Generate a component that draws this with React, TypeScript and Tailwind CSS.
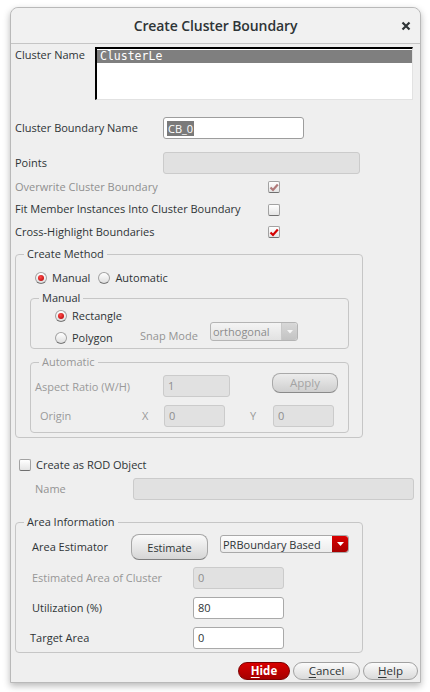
import React from "react";

const font = { fontFamily: '"Open Sans", "Liberation Sans", sans-serif' };

const Check = ({ checked = false, disabled = false }: { checked?: boolean; disabled?: boolean }) => (
  <span className="flex items-center justify-center w-[12px] h-[12px] rounded-[2px] border border-[#a2a2a2] border-b-[#6f6f6f] bg-gradient-to-b from-white to-[#e4e4e4]">
    {checked && (
      <svg width="10" height="9" viewBox="0 0 10 9">
        <path
          d="M1.5 4.5 L4 7 L8.8 1.5"
          fill="none"
          stroke={disabled ? "#b07a7a" : "#d40000"}
          strokeWidth="2.2"
        />
      </svg>
    )}
  </span>
);

const Radio = ({ on = false }: { on?: boolean }) => (
  <span className="flex items-center justify-center w-[12px] h-[12px] rounded-full border border-[#a2a2a2] border-b-[#767676] bg-gradient-to-b from-white to-[#dedede]">
    {on && <span className="w-[6px] h-[6px] rounded-full bg-[radial-gradient(circle_at_40%_35%,#ff4a4a,#b00000)]" />}
  </span>
);

const Field = ({
  value = "",
  width,
  disabled = false,
  className = "",
}: {
  value?: string;
  width: string;
  disabled?: boolean;
  className?: string;
}) => (
  <div
    className={`${width} h-[22px] rounded-[3px] border flex items-center px-[4px] text-[11px] ${
      disabled
        ? "bg-[#e1e1e1] border-[#cbcbcb] text-[#8e8e8e]"
        : "bg-white border-[#a9a9a9] text-[#2e3436]"
    } ${className}`}
  >
    {value}
  </div>
);

const Group = ({
  title,
  disabled = false,
  className = "",
  children,
}: {
  title: string;
  disabled?: boolean;
  className?: string;
  children: React.ReactNode;
}) => (
  <fieldset className={`border border-[#c6c6c6] rounded-[4px] ${className}`}>
    <legend
      className={`ml-[8px] px-[3px] leading-[16px] text-[11px] ${
        disabled ? "text-[#979797]" : "text-[#2e3436]"
      }`}
    >
      {title}
    </legend>
    {children}
  </fieldset>
);

export default function App() {
  return (
    <div className="w-[430px] h-[692px] bg-white pt-[7px] pl-[10px]" style={font}>
      <div className="w-[411px] h-[676px] rounded-t-[8px] border border-[#b9b9b9] bg-[#efefef] shadow-[0_3px_7px_rgba(0,0,0,0.28)] text-[11px] text-[#2e3436] flex flex-col">
        {/* title bar */}
        <div className="h-[36px] shrink-0 rounded-t-[8px] bg-[#f1f1f1] border-b border-[#c5c5c5] flex items-center relative">
          <div className="flex-1 text-center text-[14px] font-semibold text-[#2e3436] tracking-[-0.1px]">
            Create Cluster Boundary
          </div>
          <div className="absolute right-[9px] top-[13px]">
            <svg width="10" height="10" viewBox="0 0 10 10">
              <path d="M1.5 1.5 L8.5 8.5 M8.5 1.5 L1.5 8.5" stroke="#2e3436" strokeWidth="2.2" />
            </svg>
          </div>
        </div>

        <div className="pl-[4px] flex flex-col">
          {/* cluster name */}
          <div className="flex mt-[3px]">
            <div className="w-[80px] leading-[16px]">Cluster Name</div>
            <div className="w-[318px] h-[53px] bg-white border-t-2 border-l-2 border-t-black border-l-black border-r border-b border-r-[#e2e2e2] border-b-[#e2e2e2] pt-[1px]">
              <div
                className="h-[13px] bg-[#7f7f7f] text-white text-[11.5px] leading-[13px] pl-[3px]"
                style={{ fontFamily: '"DejaVu Sans Mono", "Liberation Mono", monospace' }}
              >
                ClusterLe
              </div>
            </div>
          </div>

          {/* boundary name */}
          <div className="flex items-center mt-[17px]">
            <div className="w-[148px]">Cluster Boundary Name</div>
            <div className="w-[141px] h-[22px] rounded-[3px] border border-[#9d9d9d] bg-white flex items-center px-[3px]">
              <span className="bg-[#7a7a7a] text-white px-[1px] leading-[15px]">CB_0</span>
            </div>
          </div>

          {/* points */}
          <div className="flex items-center mt-[13px]">
            <div className="w-[148px]">Points</div>
            <Field width="w-[197px]" disabled />
          </div>

          {/* checkboxes */}
          <div className="flex items-center h-[22px] mt-[2px]">
            <div className="w-[253px] text-[#8f8f8f]">Overwrite Cluster Boundary</div>
            <Check checked disabled />
          </div>
          <div className="flex items-center h-[23px]">
            <div className="w-[253px]">Fit Member Instances Into Cluster Boundary</div>
            <Check />
          </div>
          <div className="flex items-center h-[22px]">
            <div className="w-[253px]">Cross-Highlight Boundaries</div>
            <Check checked />
          </div>

          {/* create method */}
          <Group title="Create Method" className="w-[348px] mt-[3px] pb-[4px]">
            <div className="flex items-center h-[18px] mt-[7px] pl-[19px]">
              <Radio on />
              <span className="ml-[5px]">Manual</span>
              <span className="ml-[8px]">
                <Radio />
              </span>
              <span className="ml-[5px]">Automatic</span>
            </div>

            <Group title="Manual" className="ml-[14px] mr-[13px] mt-[3px] pb-[2px]">
              <div className="flex items-center h-[16px] mt-[2px] pl-[24px]">
                <Radio on />
                <span className="ml-[5px]">Rectangle</span>
              </div>
              <div className="flex items-start pl-[24px]">
                <div className="flex items-center h-[16px] mt-[6px] w-[85px]">
                  <Radio />
                  <span className="ml-[5px]">Polygon</span>
                </div>
                <div className="mt-[4px] w-[70px] text-[#949494] leading-[16px]">Snap Mode</div>
                <div className="-mt-[2px] w-[88px] h-[19px] rounded-[3px] border border-[#b4b4b4] bg-gradient-to-b from-[#f4f4f4] to-[#e2e2e2] flex items-center">
                  <span className="flex-1 pl-[2px] text-[#8c8c8c] leading-[15px]">orthogonal</span>
                  <span className="w-[16px] h-full border-l border-[#c9c9c9] bg-gradient-to-b from-[#d8d8d8] to-[#c3c3c3] rounded-r-[3px] flex items-center justify-center">
                    <svg width="6" height="4" viewBox="0 0 6 4">
                      <path d="M0 0 L6 0 L3 3.5 Z" fill="#f6f6f6" />
                    </svg>
                  </span>
                </div>
              </div>
            </Group>

            <Group title="Automatic" disabled className="ml-[14px] mr-[13px] mt-[5px] pb-[5px] text-[#9a9a9a]">
              <div className="flex items-start mt-[3px] pl-[4px]">
                <div className="w-[128px] mt-[6px] leading-[16px]">Aspect Ratio (W/H)</div>
                <Field value="1" width="w-[67px]" disabled className="mt-[2px]" />
                <div className="ml-[42px] w-[66px] h-[20px] rounded-[8px] border border-[#a9a9a9] border-b-[#8a8a8a] bg-gradient-to-b from-[#ececec] to-[#cfcfcf] flex items-center justify-center text-[#a4a4a4] text-[11.5px]">
                  Apply
                </div>
              </div>
              <div className="flex items-center mt-[8px] pl-[9px]">
                <div className="w-[102px]">Origin</div>
                <div className="w-[22px]">X</div>
                <Field value="0" width="w-[61px]" disabled />
                <div className="ml-[25px] w-[23px]">Y</div>
                <Field value="0" width="w-[61px]" disabled />
              </div>
            </Group>
          </Group>

          {/* ROD */}
          <div className="flex items-center h-[18px] mt-[18px] pl-[4px]">
            <Check />
            <span className="ml-[5px]">Create as ROD Object</span>
          </div>
          <div className="flex items-center mt-[4px] pl-[20px]">
            <div className="w-[98px] text-[#939393]">Name</div>
            <Field width="w-[281px]" disabled />
          </div>

          {/* area information */}
          <Group title="Area Information" className="w-[348px] mt-[14px] pb-[3px]">
            <div className="flex items-start mt-[4px] pl-[16px]">
              <div className="w-[99px] mt-[5px] leading-[16px]">Area Estimator</div>
              <div className="w-[77px] h-[26px] rounded-[8px] border border-[#a7a7a7] border-b-[#7e7e7e] bg-gradient-to-b from-[#fafafa] to-[#d6d6d6] flex items-center justify-center pt-[2px]">
                Estimate
              </div>
              <div className="ml-[12px] mt-[1px] w-[129px] h-[18px] rounded-[3px] border border-[#a9a9a9] bg-gradient-to-b from-[#fdfdfd] to-[#ececec] flex items-center">
                <span className="flex-1 pl-[2px] leading-[15px]">PRBoundary Based</span>
                <span className="w-[16px] h-full rounded-r-[3px] bg-gradient-to-b from-[#d90000] to-[#a80000] flex items-center justify-center">
                  <svg width="7" height="4" viewBox="0 0 7 4">
                    <path d="M0 0 L7 0 L3.5 4 Z" fill="#fff" />
                  </svg>
                </span>
              </div>
            </div>
            <div className="flex items-center mt-[7px] pl-[16px]">
              <div className="w-[161px] text-[#979797]">Estimated Area of Cluster</div>
              <Field value="0" width="w-[91px]" disabled />
            </div>
            <div className="flex items-center mt-[8px] pl-[16px]">
              <div className="w-[161px]">Utilization (%)</div>
              <Field value="80" width="w-[91px]" />
            </div>
            <div className="flex items-center mt-[8px] pl-[14px]">
              <div className="w-[163px]">Target Area</div>
              <Field value="0" width="w-[91px]" />
            </div>
          </Group>

          {/* buttons */}
          <div className="flex justify-end mt-[9px] pr-[2px]">
            <div className="w-[52px] h-[18px] rounded-full border border-[#7c0000] bg-gradient-to-b from-[#d80000] to-[#a50000] text-white font-bold text-[11.5px] flex items-center justify-center">
              <span className="underline underline-offset-2">H</span>ide
            </div>
            <div className="ml-[3px] w-[67px] h-[18px] rounded-full border border-[#a1a1a1] bg-gradient-to-b from-[#fbfbfb] to-[#dadada] text-[11.5px] flex items-center justify-center">
              <span className="underline underline-offset-2">C</span>ancel
            </div>
            <div className="ml-[3px] w-[55px] h-[18px] rounded-full border border-[#a1a1a1] bg-gradient-to-b from-[#fbfbfb] to-[#dadada] text-[11.5px] flex items-center justify-center">
              <span className="underline underline-offset-2">H</span>elp
            </div>
          </div>
        </div>
      </div>
    </div>
  );
}
